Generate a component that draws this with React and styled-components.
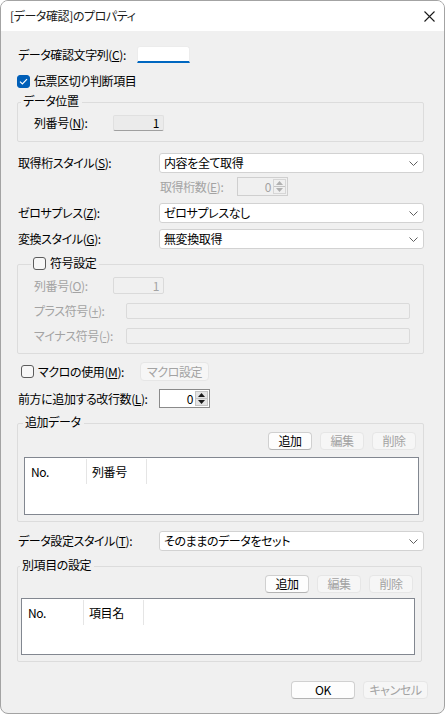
import styled, { createGlobalStyle } from "styled-components";

const GlobalStyle = createGlobalStyle`
  html, body {
    margin: 0;
    padding: 0;
    background: #ffffff;
  }
  body {
    font-family: "Noto Sans CJK JP", "Noto Sans", sans-serif;
    font-size: 12px;
    color: #000;
  }
`;

const Window = styled.div`
  width: 445px;
  height: 714px;
  box-sizing: border-box;
  border: 1px solid #a3a3a3;
  border-radius: 8px;
  overflow: hidden;
  background: #f0f0f0;
  display: flex;
  flex-direction: column;
  font-feature-settings: "palt";
  letter-spacing: -0.4px;
`;

const TitleBar = styled.div`
  height: 30px;
  flex-shrink: 0;
  background: #fff;
  display: flex;
  align-items: center;
  justify-content: space-between;
  padding: 0 9px;
  line-height: 14px;
  color: #1a1a1a;
`;

const Body = styled.div`
  flex: 1;
  display: flex;
  flex-direction: column;
  padding: 0 20px 0 16px;
`;

const Row = styled.div`
  display: flex;
  align-items: center;
  height: ${(p) => p.$h}px;
  margin-top: ${(p) => p.$mt || 0}px;
  padding-left: ${(p) => p.$pl || 0}px;
`;

const Label = styled.span`
  width: ${(p) => p.$w}px;
  flex-shrink: 0;
  padding-left: 1px;
  box-sizing: border-box;
  white-space: nowrap;
  line-height: 14px;
  color: ${(p) => (p.$disabled ? "#a3a3a3" : "#000")};
`;

const TextBox = styled.div`
  width: 53px;
  height: 100%;
  box-sizing: border-box;
  background: #fff;
  border: 1px solid #ececec;
  border-bottom: 2px solid #0067c0;
  border-radius: 3px 3px 0 0;
`;

const Field = styled.div`
  width: ${(p) => p.$w}px;
  height: 100%;
  box-sizing: border-box;
  display: flex;
  align-items: center;
  justify-content: flex-end;
  padding-right: 4px;
  line-height: 14px;
  background: ${(p) => (p.$readonly ? "#ebebeb" : "#f0f0f0")};
  border: 1px solid ${(p) => (p.$readonly ? "#e0e0e0" : "#dadada")};
  border-bottom-color: ${(p) => (p.$readonly ? "#a0a0a0" : "#dadada")};
  border-radius: 2px;
  color: ${(p) => (p.$readonly ? "#000" : "#a3a3a3")};
`;

const Combo = styled.div`
  flex: 1;
  height: 100%;
  box-sizing: border-box;
  background: #fff;
  border: 1px solid #d2d2d2;
  border-radius: 3px;
  display: flex;
  align-items: center;
  justify-content: space-between;
  padding: 0 5px 0 4px;
  line-height: 14px;
`;

const Spin = styled.div`
  width: ${(p) => p.$w}px;
  height: 100%;
  box-sizing: border-box;
  display: flex;
  align-items: stretch;
  background: ${(p) => (p.$disabled ? "#f0f0f0" : "#fff")};
  border: 1px solid ${(p) => (p.$disabled ? "#cfcfcf" : "#8a8a8a")};
  color: ${(p) => (p.$disabled ? "#a3a3a3" : "#000")};
`;

const SpinValue = styled.span`
  flex: 1;
  display: flex;
  align-items: center;
  justify-content: flex-end;
  padding-right: 2px;
  line-height: 14px;
`;

const SpinArrows = styled.div`
  width: 13px;
  margin: 1px 1px 1px 0;
  display: flex;
  flex-direction: column;
  background: ${(p) => (p.$disabled ? "#f0f0f0" : "#e4e4e4")};
  border: 1px solid ${(p) => (p.$disabled ? "#d6d6d6" : "#c4c4c4")};
  box-sizing: border-box;
`;

const SpinHalf = styled.div`
  flex: 1;
  display: flex;
  align-items: center;
  justify-content: center;
  & + & {
    border-top: 1px solid ${(p) => (p.$disabled ? "#d6d6d6" : "#c4c4c4")};
  }
`;

const Box = styled.span`
  width: 13px;
  height: 13px;
  flex-shrink: 0;
  box-sizing: border-box;
  border-radius: 3px;
  display: flex;
  align-items: center;
  justify-content: center;
  background: ${(p) => (p.$checked ? "#005fb8" : "#f7f7f7")};
  border: 1px solid ${(p) => (p.$checked ? "#005fb8" : "#5c5c5c")};
  margin-right: ${(p) => p.$gap || 0}px;
`;

const Button = styled.div`
  width: ${(p) => p.$w}px;
  height: ${(p) => p.$h || 18}px;
  box-sizing: border-box;
  display: flex;
  align-items: center;
  justify-content: center;
  line-height: 14px;
  border-radius: 4px;
  background: ${(p) => (p.$disabled ? "#f6f6f6" : "#fdfdfd")};
  border: 1px solid ${(p) => (p.$disabled ? "#e6e6e6" : "#d0d0d0")};
  border-bottom-color: ${(p) => (p.$disabled ? "#e6e6e6" : "#b3b3b3")};
  color: ${(p) => (p.$disabled ? "#a3a3a3" : "#000")};
`;

const ButtonRow = styled.div`
  display: flex;
  justify-content: flex-end;
  gap: 8px;
  margin-top: ${(p) => p.$mt || 0}px;
  margin-right: ${(p) => p.$mr || 0}px;
`;

const Group = styled.fieldset`
  margin: ${(p) => p.$mt}px ${(p) => p.$mr || 0}px 0 0;
  padding: 0;
  min-width: 0;
  border: 1px solid #dcdcdc;
  border-radius: 2px;
`;

const Legend = styled.legend`
  margin-left: ${(p) => p.$ml}px;
  padding: 0 3px 2px 2px;
  height: 16px;
  box-sizing: border-box;
  display: flex;
  align-items: center;
  line-height: 14px;
`;

const GroupBody = styled.div`
  display: flex;
  flex-direction: column;
  padding: ${(p) => p.$pad};
`;

const List = styled.div`
  height: ${(p) => p.$h}px;
  margin: ${(p) => p.$mt}px ${(p) => p.$mr}px 0 ${(p) => p.$ml}px;
  box-sizing: border-box;
  background: #fff;
  border: 1px solid #828790;
`;

const ListHeader = styled.div`
  display: flex;
  height: 25px;
  margin-top: 1px;
`;

const Column = styled.div`
  width: ${(p) => p.$w}px;
  box-sizing: border-box;
  padding-left: ${(p) => p.$pl}px;
  display: flex;
  align-items: center;
  border-right: 1px solid #e5e5e5;
  line-height: 14px;
`;

const Mn = ({ children }) => <u>{children}</u>;

const Chevron = () => (
  <svg width="9" height="5" viewBox="0 0 9 5">
    <path d="M0.5 0.5 L4.5 4.5 L8.5 0.5" fill="none" stroke="#5f5f5f" strokeWidth="1" />
  </svg>
);

const CloseIcon = () => (
  <svg width="11" height="11" viewBox="0 0 11 11">
    <path d="M0.5 0.5 L10.5 10.5 M10.5 0.5 L0.5 10.5" stroke="#1a1a1a" strokeWidth="1.1" />
  </svg>
);

const Check = () => (
  <svg width="9" height="7" viewBox="0 0 9 7">
    <path d="M1 3.6 L3.4 6 L8 1.2" fill="none" stroke="#fff" strokeWidth="1.2" />
  </svg>
);

const Tri = ({ up, color }) => (
  <svg width="7" height="4" viewBox="0 0 7 4">
    <path d={up ? "M0 4 L3.5 0 L7 4 Z" : "M0 0 L3.5 4 L7 0 Z"} fill={color} />
  </svg>
);

const Spinner = ({ w, value, disabled }) => {
  const color = disabled ? "#b0b0b0" : "#1a1a1a";
  return (
    <Spin $w={w} $disabled={disabled}>
      <SpinValue>{value}</SpinValue>
      <SpinArrows $disabled={disabled}>
        <SpinHalf $disabled={disabled}>
          <Tri up color={color} />
        </SpinHalf>
        <SpinHalf $disabled={disabled}>
          <Tri color={color} />
        </SpinHalf>
      </SpinArrows>
    </Spin>
  );
};

const Select = ({ children }) => (
  <Combo>
    <span>{children}</span>
    <Chevron />
  </Combo>
);

const ItemList = ({ h, mt, ml, mr, second }) => (
  <List $h={h} $mt={mt} $ml={ml} $mr={mr}>
    <ListHeader>
      <Column $w={62} $pl={6}>No.</Column>
      <Column $w={60} $pl={5}>{second}</Column>
    </ListHeader>
  </List>
);

const App = () => {
  return (
    <>
      <GlobalStyle />
      <Window>
        <TitleBar>
          <span>[データ確認]のプロパティ</span>
          <CloseIcon />
        </TitleBar>
        <Body>
          <Row $h={17} $mt={15}>
            <Label $w={120}>
              データ確認文字列(<Mn>C</Mn>):
            </Label>
            <TextBox />
          </Row>

          <Row $h={14} $mt={11}>
            <Box $checked $gap={3}>
              <Check />
            </Box>
            <Label $w={200}>伝票区切り判断項目</Label>
          </Row>

          <Group $mt={6}>
            <Legend $ml={3}>データ位置</Legend>
            <GroupBody $pad="5px 0 10px 15px">
              <Row $h={16}>
                <Label $w={80}>
                  列番号(<Mn>N</Mn>):
                </Label>
                <Field $w={51} $readonly>
                  1
                </Field>
              </Row>
            </GroupBody>
          </Group>

          <Row $h={20} $mt={11}>
            <Label $w={142}>
              取得桁スタイル(<Mn>S</Mn>):
            </Label>
            <Select>内容を全て取得</Select>
          </Row>

          <Row $h={19} $mt={4} $pl={142}>
            <Label $w={78} $disabled>
              取得桁数(<Mn>E</Mn>):
            </Label>
            <Spinner w={51} value="0" disabled />
          </Row>

          <Row $h={20} $mt={7}>
            <Label $w={142}>
              ゼロサプレス(<Mn>Z</Mn>):
            </Label>
            <Select>ゼロサプレスなし</Select>
          </Row>

          <Row $h={20} $mt={6}>
            <Label $w={142}>
              変換スタイル(<Mn>G</Mn>):
            </Label>
            <Select>無変換取得</Select>
          </Row>

          <Group $mt={7}>
            <Legend $ml={13}>
              <Box $gap={4} />
              符号設定
            </Legend>
            <GroupBody $pad="5px 0 9px 15px">
              <Row $h={17}>
                <Label $w={80} $disabled>
                  列番号(<Mn>O</Mn>):
                </Label>
                <Field $w={51}>1</Field>
              </Row>
              <Row $h={16} $mt={9}>
                <Label $w={93} $disabled>
                  プラス符号(<Mn>+</Mn>):
                </Label>
                <Field $w={284} />
              </Row>
              <Row $h={16} $mt={9}>
                <Label $w={93} $disabled>
                  マイナス符号(<Mn>-</Mn>):
                </Label>
                <Field $w={284} />
              </Row>
            </GroupBody>
          </Group>

          <Row $h={19} $mt={8} $pl={4}>
            <Box $gap={3} />
            <Label $w={103}>
              マクロの使用(<Mn>M</Mn>):
            </Label>
            <Button $w={69} $h={19} $disabled>
              マクロ設定
            </Button>
          </Row>

          <Row $h={19} $mt={8}>
            <Label $w={142}>
              前方に追加する改行数(<Mn>L</Mn>):
            </Label>
            <Spinner w={51} value="0" />
          </Row>

          <Group $mt={7}>
            <Legend $ml={5}>追加データ</Legend>
            <GroupBody $pad="1px 0 6px 0">
              <ButtonRow $mr={7}>
                <Button $w={44}>追加</Button>
                <Button $w={44} $disabled>
                  編集
                </Button>
                <Button $w={44} $disabled>
                  削除
                </Button>
              </ButtonRow>
              <ItemList h={58} mt={7} ml={6} mr={4} second="列番号" />
            </GroupBody>
          </Group>

          <Row $h={20} $mt={9}>
            <Label $w={142}>
              データ設定スタイル(<Mn>T</Mn>):
            </Label>
            <Select>そのままのデータをセット</Select>
          </Row>

          <Group $mt={7} $mr={2}>
            <Legend $ml={2}>別項目の設定</Legend>
            <GroupBody $pad="1px 0 6px 0">
              <ButtonRow $mr={8}>
                <Button $w={44}>追加</Button>
                <Button $w={44} $disabled>
                  編集
                </Button>
                <Button $w={44} $disabled>
                  削除
                </Button>
              </ButtonRow>
              <ItemList h={57} mt={5} ml={3} mr={6} second="項目名" />
            </GroupBody>
          </Group>

          <ButtonRow $mt={19} $mr={-4}>
            <Button $w={64}>OK</Button>
            <Button $w={65} $disabled>
              キャンセル
            </Button>
          </ButtonRow>
        </Body>
      </Window>
    </>
  );
};

export default App;
